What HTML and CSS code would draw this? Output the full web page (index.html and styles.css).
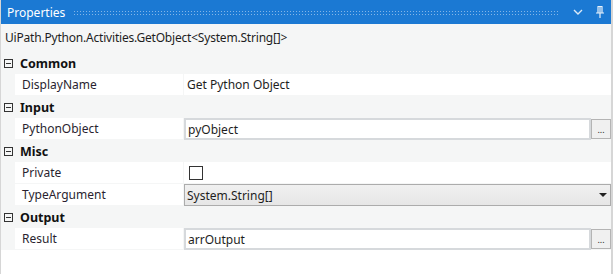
FILE: index.html
```html
<!DOCTYPE html>
<html lang="en">
<head>
    <meta charset="UTF-8">
    <title>Properties</title>
    <link rel="stylesheet" href="styles.css">
</head>
<body>
    <div class="panel">
        <div class="titlebar">
            <span class="title">Properties</span>
            <span class="grip"></span>
            <svg class="tb-icon" width="10" height="8" viewBox="0 0 10 8"><path d="M1 2 L5 6 L9 2" fill="none" stroke="#dbe9f7" stroke-width="1.4"/></svg>
            <svg class="tb-icon" width="10" height="14" viewBox="0 0 10 14"><path d="M2.5 1.5 H7.5 M3 1.5 V7.5 M7 1.5 V7.5 M5 1.5 V7.5 M1 8 H9 M5 8 V13" fill="none" stroke="#e8f1fa" stroke-width="1.2"/></svg>
        </div>

        <div class="typename">UiPath.Python.Activities.GetObject&lt;System.String[]&gt;</div>

        <div class="grid">
            <div class="category"><span class="toggle"></span>Common</div>
            <div class="prop">
                <div class="name">DisplayName</div>
                <div class="value">Get Python Object</div>
            </div>

            <div class="category"><span class="toggle"></span>Input</div>
            <div class="prop">
                <div class="name">PythonObject</div>
                <div class="value editor">
                    <div class="textbox">pyObject</div>
                    <div class="dots">...</div>
                </div>
            </div>

            <div class="category"><span class="toggle"></span>Misc</div>
            <div class="prop">
                <div class="name">Private</div>
                <div class="value"><span class="checkbox"></span></div>
            </div>
            <div class="prop">
                <div class="name">TypeArgument</div>
                <div class="value editor">
                    <div class="combo">System.String[]<span class="arrow"></span></div>
                </div>
            </div>

            <div class="category"><span class="toggle"></span>Output</div>
            <div class="prop">
                <div class="name">Result</div>
                <div class="value editor">
                    <div class="textbox">arrOutput</div>
                    <div class="dots">...</div>
                </div>
            </div>
        </div>

        <div class="filler"></div>
    </div>
</body>
</html>
```

FILE: styles.css
```css
body {
    margin: 0;
    background-color: white;
    font-family: "Noto Sans", "Liberation Sans", sans-serif;
    font-size: 12px;
    color: #1e1e1e;
}
.panel {
    width: 613px;
    height: 274px;
    box-sizing: border-box;
    border-left: 1px solid #d6d6d6;
    border-right: 2px solid #d6d6d6;
    display: flex;
    flex-direction: column;
    background-color: #f5f6f6;
}
.titlebar {
    height: 24px;
    background-color: #1b79d3;
    display: flex;
    align-items: center;
    padding: 0 6px 0 6px;
    color: white;
    gap: 8px;
}
.title {
    font-size: 12px;
}
.grip {
    flex: 1;
    height: 5px;
    margin-right: 2px;
    background-image:
        radial-gradient(circle, rgba(255,255,255,0.45) 0.6px, transparent 0.8px);
    background-size: 3px 3px;
}
.tb-icon {
    display: block;
    margin-left: 4px;
}
.typename {
    height: 28px;
    line-height: 28px;
    padding-left: 4px;
    letter-spacing: -0.2px;
    color: #1e1e1e;
}
.category {
    height: 22px;
    display: flex;
    align-items: center;
    font-weight: bold;
    font-size: 12.5px;
    color: #111;
}
.toggle {
    width: 7px;
    height: 7px;
    border: 1px solid #333;
    margin: 0 7px 0 3px;
    position: relative;
}
.toggle::after {
    content: "";
    position: absolute;
    left: 1px;
    right: 1px;
    top: 3px;
    height: 1px;
    background-color: #333;
}
.prop {
    display: grid;
    grid-template-columns: 168px 1fr;
    column-gap: 1px;
    margin-left: 14px;
    height: 22px;
}
.name, .value {
    background-color: white;
    height: 21px;
    display: flex;
    align-items: center;
}
.name {
    padding-left: 7px;
    color: #2a1f2f;
}
.value {
    padding-left: 3px;
}
.value.editor {
    padding-left: 0;
    height: 22px;
    background-color: transparent;
}
.textbox {
    flex: 1;
    height: 22px;
    box-sizing: border-box;
    border: 2px solid #d6d9dc;
    background-color: white;
    padding-left: 2px;
    display: flex;
    align-items: center;
}
.dots {
    width: 20px;
    height: 20px;
    box-sizing: border-box;
    border: 1px solid #b4b4b4;
    background-color: #f0f0f0;
    font-size: 9px;
    text-align: center;
    line-height: 20px;
}
.checkbox {
    width: 12px;
    height: 12px;
    border: 1px solid #333;
    margin-left: 2px;
}
.combo {
    flex: 1;
    height: 22px;
    box-sizing: border-box;
    border: 1px solid #acacac;
    background: linear-gradient(#f0f0f0, #e6e6e6);
    padding-left: 2px;
    display: flex;
    align-items: center;
}
.arrow {
    margin-left: auto;
    margin-right: 3px;
    width: 0;
    height: 0;
    border-left: 4px solid transparent;
    border-right: 4px solid transparent;
    border-top: 4px solid #222;
}
.filler {
    flex: 1;
    background-color: white;
}
```
